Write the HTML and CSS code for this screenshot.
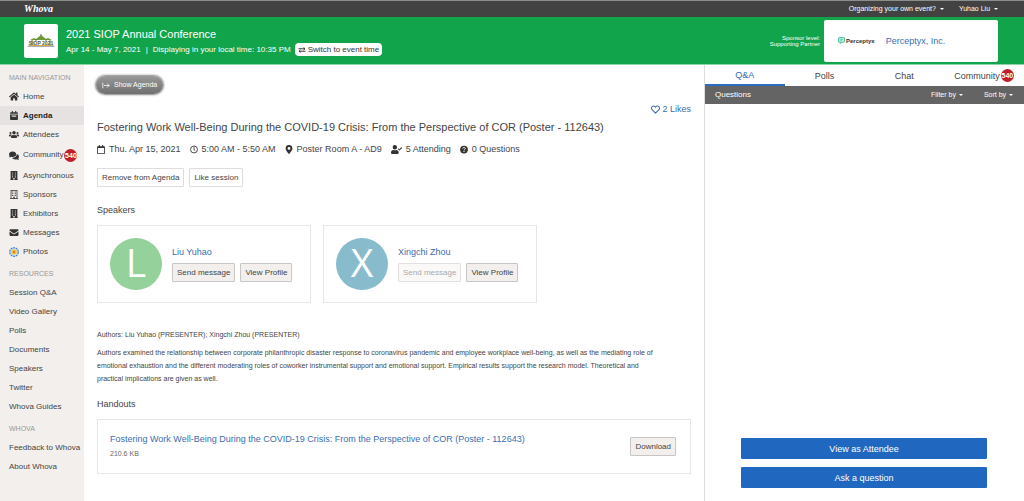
FILE: index.html
```html
<!DOCTYPE html>
<html lang="en">
<head>
<meta charset="utf-8">
<title>2021 SIOP Annual Conference</title>
<link rel="stylesheet" href="styles.css">
</head>
<body>
<svg class="defs" aria-hidden="true">
  <symbol id="home" viewBox="0 0 576 512"><path d="M280.37 148.26L96 300.11V464a16 16 0 0 0 16 16l112.06-.29a16 16 0 0 0 15.92-16V368a16 16 0 0 1 16-16h64a16 16 0 0 1 16 16v95.64a16 16 0 0 0 16 16.05L464 480a16 16 0 0 0 16-16V300L295.67 148.26a12.19 12.19 0 0 0-15.3 0zM571.6 251.47L488 182.56V44.05a12 12 0 0 0-12-12h-56a12 12 0 0 0-12 12v72.61L318.47 43a48 48 0 0 0-61 0L4.34 251.47a12 12 0 0 0-1.6 16.9l25.5 31A12 12 0 0 0 45.15 301l235.22-193.74a12.19 12.19 0 0 1 15.3 0L530.9 301a12 12 0 0 0 16.9-1.6l25.5-31a12 12 0 0 0-1.7-16.93z"/></symbol>
  <symbol id="cal" viewBox="0 0 448 512"><path d="M0 464c0 26 22 48 48 48h352c26 0 48-22 48-48V192H0zM96 256h256v64H96zM400 64h-48V12a12 12 0 0 0-12-12h-40a12 12 0 0 0-12 12v52H160V12a12 12 0 0 0-12-12h-40a12 12 0 0 0-12 12v52H48C22 64 0 86 0 112v48h448v-48c0-26-22-48-48-48z" fill-rule="evenodd"/></symbol>
  <symbol id="users" viewBox="0 0 640 512"><path d="M96 224a64 64 0 1 0 0-128 64 64 0 0 0 0 128zm448 0a64 64 0 1 0 0-128 64 64 0 0 0 0 128zm32 32h-64c-18 0-34 7-45 19 40 22 69 62 75 109h66c18 0 32-14 32-32v-32c0-35-29-64-64-64zm-256 0a112 112 0 1 0 0-224 112 112 0 0 0 0 224zm77 32h-8c-42 20-96 20-138 0h-8c-64 0-115 52-115 115v29c0 26 21 48 48 48h288c26 0 48-22 48-48v-29c0-63-51-115-115-115zm-224-13c-11-12-27-19-45-19H64c-35 0-64 29-64 64v32c0 18 14 32 32 32h66c6-47 35-87 75-109z"/></symbol>
  <symbol id="comments" viewBox="0 0 576 512"><path d="M416 192C416 104 323 32 208 32S0 104 0 192c0 34 14 66 38 92-13 30-36 54-36 55-3 3-3 7-2 11 2 4 5 6 9 6 48 0 88-17 114-34 26 9 54 14 85 14 115 0 208-72 208-144zm122 220c24-26 38-58 38-92 0-67-53-124-129-147 1 6 1 12 1 19 0 106-108 192-240 192-11 0-21-1-31-2 31 57 105 98 191 98 31 0 60-5 85-14 26 17 66 34 114 34 4 0 7-2 9-6 1-4 1-8-2-11 0-1-23-25-36-71z"/></symbol>
  <symbol id="building" viewBox="0 0 448 512"><path fill-rule="evenodd" d="M32 0h384v480h32v32H0v-32h32zM124 80v64h48V80zm152 0v64h48V80zM124 192v64h48v-64zm152 0v64h48v-64zM124 304v64h48v-64zm152 0v64h48v-64zM184 400v80h80v-80z"/></symbol>
  <symbol id="building-o" viewBox="0 0 448 512"><path fill-rule="evenodd" d="M32 0h384v472h32v40H0v-40h32zM76 44v428h108v-88h80v88h108V44zM120 88h64v56h-64zm144 0h64v56h-64zM120 188h64v56h-64zm144 0h64v56h-64zM120 288h64v56h-64zm144 0h64v56h-64z"/></symbol>
  <symbol id="mail" viewBox="0 0 512 512"><path d="M0 148V112c0-26 22-48 48-48h416c26 0 48 22 48 48v36L290 300c-24 17-44 17-68 0zm0 50v202c0 26 22 48 48 48h416c26 0 48-22 48-48V198L306 336c-34 24-66 24-100 0z"/></symbol>
  <symbol id="cal-o" viewBox="0 0 448 512"><path fill-rule="evenodd" d="M400 64h-48V12a12 12 0 0 0-12-12h-40a12 12 0 0 0-12 12v52H160V12a12 12 0 0 0-12-12h-40a12 12 0 0 0-12 12v52H48C22 64 0 86 0 112v352c0 26 22 48 48 48h352c26 0 48-22 48-48V112c0-26-22-48-48-48zM48 170h352v294H48z"/></symbol>
  <symbol id="clock" viewBox="0 0 512 512"><g fill="none" stroke="currentColor" stroke-width="56"><circle cx="256" cy="256" r="222"/><path d="M256 110v160l84 62"/></g></symbol>
  <symbol id="pin" viewBox="0 0 384 512"><path fill-rule="evenodd" d="M172 502C27 291 0 270 0 192a192 192 0 1 1 384 0c0 78-27 99-172 310-10 13-30 13-40 0zm20-230a80 80 0 1 0 0-160 80 80 0 0 0 0 160z"/></symbol>
  <symbol id="user-check" viewBox="0 0 640 512"><path d="M224 256a128 128 0 1 0 0-256 128 128 0 0 0 0 256zm90 32h-17c-46 21-100 21-146 0h-17C60 288 0 348 0 422v42c0 26 22 48 48 48h352c26 0 48-22 48-48v-42c0-74-60-134-134-134zM637 161l-28-29c-4-4-11-4-15 0L488 237l-46-46c-4-4-11-4-15 0l-29 28c-4 4-4 11 0 15l81 82c4 4 11 4 15 0l143-140c4-4 4-11 0-15z"/></symbol>
  <symbol id="question" viewBox="0 0 512 512"><circle cx="256" cy="256" r="248"/><path fill="none" stroke="#fff" stroke-width="56" d="M168 195c10-90 174-94 174 0 0 62-86 54-86 120"/><circle cx="256" cy="378" r="38" fill="#fff"/></symbol>
  <symbol id="heart" viewBox="0 0 512 512"><path fill="none" stroke="currentColor" stroke-width="60" stroke-linejoin="round" d="M256 462L62 264C-10 180 50 58 142 58c52 0 86 30 114 66 28-36 62-66 114-66 92 0 152 122 80 206z"/></symbol>
</svg>

<header>
  <div class="topbar">
    <a class="whova" href="#">Whova</a>
    <nav class="account" aria-label="Account">
      <button type="button">Organizing your own event? <i class="caret"></i></button>
      <button type="button">Yuhao Liu <i class="caret"></i></button>
    </nav>
  </div>
  <div class="banner">
    <div class="event-logo">
      <svg viewBox="0 0 28 14" role="img" aria-label="SIOP 2021">
        <path d="M3 6L7 4l2 1 5-4 5 4 2-1 4 2z" fill="#6d9a35"/>
        <path d="M14 0v2M5 6v5M9 5v2M19 5v2M23 6v5" stroke="#597d34"/>
        <path d="M2 11h24l2 2H0z" fill="#a9adb8"/>
        <path d="M3 11.500h22" stroke="#d8ac45"/>
        <text x="14" y="10.500" text-anchor="middle">SIOP 2021</text>
      </svg>
    </div>
    <div class="event">
      <h1>2021 SIOP Annual Conference</h1>
      <div class="dates">
        <span>Apr 14 - May 7, 2021</span><span class="bar">|</span><span>Displaying in your local time: 10:35 PM</span>
        <button type="button" class="switch"><svg viewBox="0 0 16 12" aria-hidden="true"><path d="M1 3.500h13M11 .8l3 2.700-3 2.700M15 8.500H2M5 5.800L2 8.500l3 2.700" fill="none" stroke="#333" stroke-width="1.900"/></svg>Switch to event time</button>
      </div>
    </div>
    <p class="level">Sponsor level:<br>Supporting Partner</p>
    <a class="sponsor" href="#">
      <span class="plogo"><svg viewBox="0 0 12 12" aria-hidden="true"><path d="M2 1h8q1 0 1 1v6q0 1-1 1H7l-3 2V9H2Q1 9 1 8V2q0-1 1-1z" fill="#c8f0e0" stroke="#35b597" stroke-width="1.500"/><path d="M3 4h6M3 6.500h4" stroke="#35b597"/></svg>Perceptyx</span>
      <span>Perceptyx, Inc.</span>
    </a>
  </div>
</header>

<div class="layout">
  <nav class="sidebar" aria-label="Event">
    <h2>MAIN NAVIGATION</h2>
    <ul class="icons">
      <li><a href="#"><svg><use href="#home"/></svg>Home</a></li>
      <li><a href="#" class="current" aria-current="page"><svg><use href="#cal"/></svg>Agenda</a></li>
      <li><a href="#"><svg><use href="#users"/></svg>Attendees</a></li>
      <li><a href="#" class="tall"><svg><use href="#comments"/></svg>Community<b class="badge">540</b></a></li>
      <li><a href="#"><svg><use href="#building"/></svg>Asynchronous</a></li>
      <li><a href="#"><svg><use href="#building-o"/></svg>Sponsors</a></li>
      <li><a href="#"><svg><use href="#building"/></svg>Exhibitors</a></li>
      <li><a href="#"><svg><use href="#mail"/></svg>Messages</a></li>
      <li><a href="#"><svg viewBox="0 0 20 20"><circle cx="10" cy="10" r="8.500" fill="#d9ecfa" stroke="#4a86c5" stroke-width="2.500" stroke-dasharray="4 1.300"/><circle cx="10" cy="10" r="5.500" fill="#f3c04b"/><circle cx="10" cy="10" r="2.500" fill="#d98320"/></svg>Photos</a></li>
    </ul>
    <h2>RESOURCES</h2>
    <ul>
      <li><a href="#">Session Q&amp;A</a></li>
      <li><a href="#">Video Gallery</a></li>
      <li><a href="#">Polls</a></li>
      <li><a href="#">Documents</a></li>
      <li><a href="#">Speakers</a></li>
      <li><a href="#">Twitter</a></li>
      <li><a href="#">Whova Guides</a></li>
    </ul>
    <h2>WHOVA</h2>
    <ul>
      <li><a href="#">Feedback to Whova</a></li>
      <li><a href="#">About Whova</a></li>
    </ul>
  </nav>

  <main>
    <button type="button" class="show"><svg viewBox="0 0 20 16" aria-hidden="true"><path d="M2 1v14M5 8h13M13 3l5 5-5 5" fill="none" stroke="#fff" stroke-width="2"/></svg>Show Agenda</button>
    <a class="likes" href="#"><svg><use href="#heart"/></svg>2 Likes</a>
    <h2 class="title">Fostering Work Well-Being During the COVID-19 Crisis: From the Perspective of COR (Poster - 112643)</h2>
    <ul class="meta">
      <li><svg><use href="#cal-o"/></svg>Thu. Apr 15, 2021</li>
      <li><svg><use href="#clock"/></svg>5:00 AM - 5:50 AM</li>
      <li><svg><use href="#pin"/></svg>Poster Room A - AD9</li>
      <li><svg class="wide"><use href="#user-check"/></svg>5 Attending</li>
      <li><svg><use href="#question"/></svg>0 Questions</li>
    </ul>
    <div class="actions">
      <button type="button" class="btn plain">Remove from Agenda</button>
      <button type="button" class="btn plain">Like session</button>
    </div>
    <h3>Speakers</h3>
    <div class="cards">
      <article class="card">
        <span class="avatar green">L</span>
        <div>
          <a href="#">Liu Yuhao</a>
          <div class="actions"><button type="button" class="btn">Send message</button><button type="button" class="btn">View Profile</button></div>
        </div>
      </article>
      <article class="card">
        <span class="avatar blue">X</span>
        <div>
          <a href="#">Xingchi Zhou</a>
          <div class="actions"><button type="button" class="btn" disabled>Send message</button><button type="button" class="btn">View Profile</button></div>
        </div>
      </article>
    </div>
    <div class="abstract">
      <p>Authors: Liu Yuhao (PRESENTER); Xingchi Zhou (PRESENTER)</p>
      <p>Authors examined the relationship between corporate philanthropic disaster response to coronavirus pandemic and employee workplace well-being, as well as the mediating role of<br>emotional exhaustion and the different moderating roles of coworker instrumental support and emotional support. Empirical results support the research model. Theoretical and<br>practical implications are given as well.</p>
    </div>
    <h3>Handouts</h3>
    <div class="handout">
      <div>
        <a href="#">Fostering Work Well-Being During the COVID-19 Crisis: From the Perspective of COR (Poster - 112643)</a>
        <small>210.6 KB</small>
      </div>
      <button type="button" class="btn">Download</button>
    </div>
  </main>

  <aside>
    <nav class="tabs" aria-label="Session">
      <a href="#" class="on" aria-current="true">Q&amp;A</a>
      <a href="#">Polls</a>
      <a href="#">Chat</a>
      <a href="#">Community<b class="badge">540</b></a>
    </nav>
    <div class="toolbar">
      <span>Questions</span>
      <button type="button">Filter by <i class="caret"></i></button>
      <button type="button">Sort by <i class="caret"></i></button>
    </div>
    <div class="cta">
      <button type="button">View as Attendee</button>
      <button type="button">Ask a question</button>
    </div>
  </aside>
</div>
</body>
</html>
```
FILE: styles.css
```css
* { box-sizing: border-box; }
body, h1, h2, h3, p, ul { margin: 0; padding: 0; font-weight: 400; }
body {
  min-height: 100vh;
  display: flex;
  flex-direction: column;
  font: 8px/12px "Liberation Sans", Arial, sans-serif;
  color: #444;
  background: #fff;
}
ul { list-style: none; }
a { color: #3a6eb0; text-decoration: none; }
button { font: inherit; color: inherit; border: 0; padding: 0; margin: 0; background: none; white-space: nowrap; cursor: pointer; }
svg { fill: currentColor; flex: none; }
.defs { position: absolute; width: 0; height: 0; }
.caret {
  display: inline-block;
  vertical-align: middle;
  margin-left: 1px;
  border: 2px solid transparent;
  border-top-color: currentColor;
  border-bottom: 0;
}
.badge {
  display: inline-flex;
  align-items: center;
  justify-content: center;
  flex: none;
  width: 13px;
  height: 13px;
  margin-left: 1px;
  border-radius: 50%;
  background: #c01f2a;
  color: #fff;
  font-size: 7px;
  line-height: 13px;
}

.topbar {
  display: flex;
  justify-content: space-between;
  align-items: center;
  height: 17px;
  padding: 0 26px 0 24px;
  border-top: 1px solid #8a8f8c;
  background: #424242;
  color: #fff;
}
.whova { color: #fff; font: italic bold 10px/14px "Liberation Serif", serif; }
.account { display: flex; gap: 15px; font-size: 7px; }
.account .caret { margin-left: 2px; }
.banner {
  display: flex;
  align-items: center;
  height: 48px;
  padding-right: 26px;
  padding-left: 24px;
  border-bottom: 1px solid #8fd5aa;
  background: #12a44b;
  color: #fff;
}
.event-logo {
  display: flex;
  align-items: center;
  justify-content: center;
  width: 34px;
  height: 34px;
  margin-right: 8px;
  border-radius: 2px;
  background: #fff;
}
.event-logo svg { width: 28px; height: 14px; }
.event-logo text { font: bold 5px "Liberation Sans", sans-serif; fill: #4c5c35; }
.event { flex: 1; }
.event h1 { font-size: 11px; line-height: 18px; }
.dates { display: flex; align-items: center; white-space: nowrap; }
.bar { margin: 0 5px; }
.switch {
  display: flex;
  align-items: center;
  gap: 2px;
  height: 13px;
  margin-left: 4px;
  padding: 0 3px;
  border-radius: 4px;
  background: #fff;
  color: #333;
}
.switch svg { width: 8px; height: 6px; }
.level { margin-right: 4px; font-size: 6px; line-height: 6px; text-align: right; }
.sponsor {
  display: flex;
  align-items: center;
  gap: 11px;
  width: 174px;
  height: 42px;
  padding-left: 14px;
  border-radius: 2px;
  background: #fff;
  font-size: 9px;
}
.plogo { display: flex; align-items: center; gap: 1px; color: #333; font-size: 6px; font-weight: 700; }
.plogo svg { width: 7px; height: 7px; }

.layout { flex: 1; display: grid; grid-template-columns: 84px minmax(0, 1fr) 320px; }

.sidebar { background: #f2efed; padding-top: 4px; }
.sidebar h2 { padding-left: 9px; font-size: 7px; line-height: 18px; color: #999; white-space: nowrap; }
.sidebar ul + h2 { padding-top: 4px; }
.sidebar a { display: flex; align-items: center; height: 19px; padding-left: 9px; color: #444; white-space: nowrap; }
.sidebar .tall { height: 22px; }
.sidebar .current { background: #e5e2e1; color: #222; font-weight: 700; }
.icons svg { width: 10px; height: 9px; margin-right: 4px; color: #333; }
.icons li:last-child svg { height: 10px; }

main { display: flex; flex-direction: column; padding: 11px 13px 20px; }
.show {
  display: flex;
  align-items: center;
  align-self: flex-start;
  gap: 4px;
  height: 18px;
  margin-left: -1px;
  padding: 0 6px;
  border-radius: 9px;
  background: linear-gradient(#999, #707070);
  box-shadow: 0 0 2px 1px #888;
  color: #fff;
  font-size: 7px;
}
.show svg { width: 8px; height: 7px; }
.likes { display: flex; align-items: center; align-self: flex-end; gap: 2px; margin-top: 9px; font-size: 9px; }
.likes svg { width: 9px; height: 9px; }
.title { margin-top: 4px; font-size: 11px; line-height: 16px; }
.meta { display: flex; gap: 9px; margin-top: 8px; font-size: 9px; }
.meta li { display: flex; align-items: center; gap: 4px; white-space: nowrap; }
.meta svg { width: 8px; height: 9px; color: #333; }
.meta .wide { width: 11px; }
.actions { display: flex; gap: 5px; }
.meta + .actions { margin-top: 13px; }
.btn {
  height: 19px;
  padding: 0 4px;
  border: 1px solid #c8c6c4;
  border-radius: 1px;
  background: #f2efed;
  color: #444;
}
.btn.plain { border-color: #ddd; background: #fff; }
.btn:disabled { border-color: #e4e2e0; background: #faf9f8; color: #aaa; }
h3 { margin-top: 17px; font-size: 9px; line-height: 12px; }
.cards { display: flex; gap: 12px; margin-top: 9px; }
.card { display: flex; align-items: center; gap: 10px; width: 214px; height: 78px; padding: 0 12px; border: 1px solid #e6e6e6; font-size: 9px; }
.card .actions { margin-top: 5px; font-size: 8px; }
.avatar {
  display: flex;
  align-items: center;
  justify-content: center;
  flex: none;
  width: 52px;
  height: 52px;
  padding-bottom: 4px;
  border-radius: 50%;
  color: #fff;
  font: 500 39px/48px "Open Sans", sans-serif;
}
.green { background: #95d19b; }
.blue { background: #88bccd; }
.abstract { margin-top: 25px; font-size: 7px; line-height: 13px; }
.abstract p + p { margin-top: 5px; }
.abstract + h3 { margin-top: 13px; }
.handout {
  display: flex;
  align-items: center;
  justify-content: space-between;
  height: 55px;
  margin-top: 9px;
  padding: 0 14px 0 12px;
  border: 1px solid #e6e6e6;
  font-size: 9px;
}
.handout small { display: block; margin-top: 3px; font-size: 7px; color: #666; }
.handout .btn { font-size: 8px; }

aside { display: flex; flex-direction: column; border-left: 1px solid #ddd; }
.tabs { display: grid; grid-template-columns: repeat(4, 1fr); height: 21px; font-size: 9px; }
.tabs a { display: flex; align-items: center; justify-content: center; color: #444; }
.tabs .on { border-bottom: 2px solid #2a6cc0; color: #2a6cc0; }
.toolbar { display: flex; align-items: center; gap: 21px; height: 18px; padding: 0 11px 0 10px; background: #646464; color: #fff; }
.toolbar span { flex: 1; }
.toolbar button { font-size: 7px; }
.cta { display: grid; gap: 8px; margin-top: auto; padding: 0 37px 13px 36px; }
.cta button { height: 21px; border-radius: 1px; background: #2068bf; color: #fff; font-size: 9px; }
```
